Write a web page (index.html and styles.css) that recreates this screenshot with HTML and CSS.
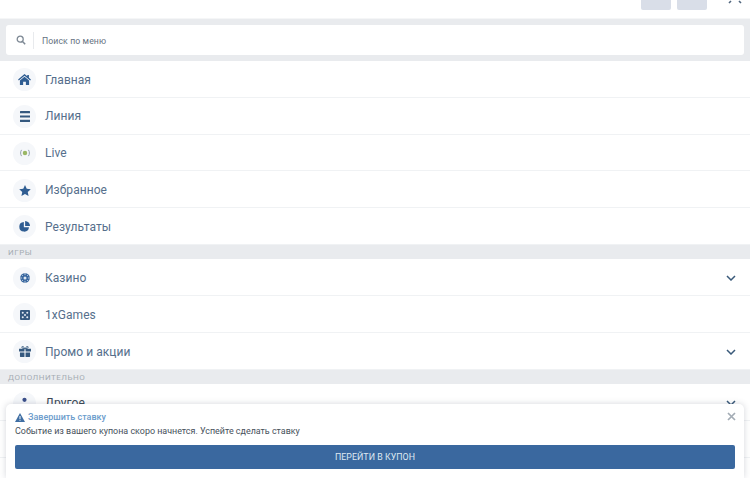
FILE: index.html
```html
<!DOCTYPE html>
<html lang="ru">
<head>
<meta charset="utf-8">
<title>Меню</title>
<link rel="stylesheet" href="styles.css">
</head>
<body>
<div class="page">
  <header class="top">
    <span class="top-btn"></span>
    <span class="top-btn"></span>
    <svg class="top-close" width="14" height="4" viewBox="0 0 14 4"><path d="M1 3 3 1M11 1l2 2" stroke="#51667e" stroke-width="1.6" fill="none"/></svg>
  </header>
  <div class="search-band">
    <div class="search">
      <svg class="search-icon" width="10" height="10" viewBox="0 0 10 10"><circle cx="4.2" cy="4.2" r="3" fill="none" stroke="#7d8894" stroke-width="1.3"/><path d="M6.5 6.5 9.2 9.2" stroke="#7d8894" stroke-width="1.5"/></svg>
      <span class="search-sep"></span>
      <span class="search-text">Поиск по меню</span>
    </div>
  </div>
  <nav>
    <a class="row"><span class="ico"><svg width="13" height="11" viewBox="0 0 14 12"><path d="M7 0 0 6l.8 1L7 1.8 13.2 7l.8-1-2.200-1.900V1h-1.800v1.500z" fill="#2f5d92"/><path d="M7 3 2 7.200V12h3.500V8.500h3V12H12V7.200z" fill="#2f5d92"/></svg></span><span class="label">Главная</span></a>
    <a class="row"><span class="ico"><svg width="10" height="11" viewBox="0 0 10 11"><path d="M.5 0h9a.5.5 0 0 1 .5.500V2.200H0V.5A.5.5 0 0 1 .5 0zM0 4.400h10v2.200H0zM0 8.800h10v1.700a.5.5 0 0 1-.5.500H.5a.5.5 0 0 1-.5-.500z" fill="#35597f"/></svg></span><span class="label">Линия</span></a>
    <a class="row"><span class="ico"><svg width="10" height="8" viewBox="0 0 11 9"><circle cx="5.500" cy="4.500" r="2.500" fill="#9ab765"/><path d="M1.600 1C.2 3 .2 6 1.600 8M9.400 1c1.400 2 1.400 5 0 7" fill="none" stroke="#8a97a6" stroke-width="1"/></svg></span><span class="label">Live</span></a>
    <a class="row"><span class="ico"><svg width="12" height="11" viewBox="0 0 13 12"><path d="M6.500 0l1.900 4 4.400.500-3.300 3 .9 4.400-3.900-2.200-3.900 2.200.9-4.400L.2 4.500 4.600 4z" fill="#2f5d92"/></svg></span><span class="label">Избранное</span></a>
    <a class="row"><span class="ico"><svg width="11" height="11" viewBox="0 0 12 12"><path d="M5.300 1a5.300 5.300 0 1 0 5.600 5.900H5.300z" fill="#2f5d92"/><path d="M6.700 0v5.500H12A5.500 5.500 0 0 0 6.700 0z" fill="#2f5d92"/></svg></span><span class="label">Результаты</span></a>
    <div class="band">ИГРЫ</div>
    <a class="row"><span class="ico"><svg width="10" height="10" viewBox="0 0 12 12"><circle cx="6" cy="6" r="5.800" fill="#3a689f"/><circle cx="6" cy="6" r="1.800" fill="#dfe7f0"/><path d="M6 .5v2M6 9.500v2M.5 6h2M9.500 6h2M2.100 2.100l1.400 1.400M8.500 8.500l1.400 1.400M9.900 2.100 8.500 3.500M3.500 8.500 2.100 9.900" stroke="#dfe7f0" stroke-width=".9"/></svg></span><span class="label">Казино</span><svg class="chev" width="10" height="6" viewBox="0 0 10 6"><path d="M1 1l4 4 4-4" fill="none" stroke="#3a5a7a" stroke-width="1.500"/></svg></a>
    <a class="row"><span class="ico"><svg width="10" height="10" viewBox="0 0 11 11"><rect width="11" height="11" rx="1" fill="#35597f"/><g fill="#e6edf4"><circle cx="3" cy="3" r="1.100"/><circle cx="8" cy="3" r="1.100"/><circle cx="5.500" cy="5.500" r="1.100"/><circle cx="3" cy="8" r="1.100"/><circle cx="8" cy="8" r="1.100"/></g></svg></span><span class="label">1xGames</span></a>
    <a class="row"><span class="ico"><svg width="12" height="11" viewBox="0 0 13 12"><path d="M0 3h5.900v3H0zM7.100 3H13v3H7.100zM1 7h4.900v5H1.500a.5.500 0 0 1-.5-.500zM7.100 7H12v4.500a.5.500 0 0 1-.5.500H7.100z" fill="#35597f"/><path d="M6.500 3C5 3 3 2.500 3 1.200 3 .2 4.800-.2 6.500 3zm0 0C8 3 10 2.500 10 1.200 10 .2 8.200-.2 6.500 3z" fill="none" stroke="#35597f" stroke-width="1"/></svg></span><span class="label">Промо и акции</span><svg class="chev" width="10" height="6" viewBox="0 0 10 6"><path d="M1 1l4 4 4-4" fill="none" stroke="#3a5a7a" stroke-width="1.500"/></svg></a>
    <div class="band">ДОПОЛНИТЕЛЬНО</div>
    <a class="row"><span class="ico"><svg width="11" height="12" viewBox="0 0 12 13"><circle cx="6" cy="3" r="2.300" fill="#3a4f8a"/><path d="M1 12c0-3 2-4.500 5-4.500s5 1.500 5 4.500z" fill="#3a5f92"/></svg></span><span class="label label-dark">Другое</span><svg class="chev" width="10" height="6" viewBox="0 0 10 6"><path d="M1 1l4 4 4-4" fill="none" stroke="#3a5a7a" stroke-width="1.500"/></svg></a>
    <div class="row"></div>
  </nav>
  <aside class="toast">
    <div class="toast-title">
      <svg width="10" height="9" viewBox="0 0 10 9"><path d="M5 0 10 9H0z" fill="#3f6ea3"/><path d="M4.500 3h1v3h-1zM4.500 6.800h1v1h-1z" fill="#fff"/></svg>
      <span>Завершить ставку</span>
    </div>
    <p class="toast-text">Событие из вашего купона скоро начнется. Успейте сделать ставку</p>
    <button class="toast-btn">ПЕРЕЙТИ В КУПОН</button>
    <svg class="toast-close" width="9" height="9" viewBox="0 0 9 9"><path d="M1 1l7 7M8 1 1 8" stroke="#a3acb5" stroke-width="1.700"/></svg>
  </aside>
</div>
</body>
</html>
```
FILE: styles.css
```css
* { box-sizing: border-box; }
html, body { margin: 0; padding: 0; }
body { font-family: Roboto, "Liberation Sans", sans-serif; background: #fff; }
.page { position: relative; width: 750px; height: 478px; overflow: hidden; background: #fff; }
.top { height: 19px; display: flex; align-items: flex-start; padding-left: 641px; gap: 6px; border-bottom: 1px solid #f5f6f7; }
.top-btn { width: 30px; height: 10px; background: #d9dee8; border-radius: 0 0 2px 2px; }
.top-close { margin-left: 15px; }
.search-band { height: 42px; padding: 6px; background: #e9ebee; }
.search { height: 30px; background: #fff; border-radius: 3px; display: flex; align-items: center; padding-left: 10px; }
.search-icon { flex: none; }
.search-sep { width: 1px; height: 17px; background: #e8eaed; margin: 0 8px 0 7px; }
.search-text { font-size: 8.700px; line-height: 12px; padding-top: 1px; color: #66727f; letter-spacing: .1px; }
.row { height: 36.800px; display: flex; align-items: center; padding: 1.500px 14px 0 13px; background: #fff; border-bottom: 1px solid #f0f2f4; }
.ico { flex: none; width: 23px; height: 23px; border-radius: 50%; background: #f5f7fa; display: flex; align-items: center; justify-content: center; }
.label { margin-left: 9px; flex: 1; font-size: 12px; color: #566f8c; letter-spacing: .05px; }
.label-dark { color: #3d4a58; }
.chev { flex: none; }
.band { height: 14.500px; background: #e9ebee; padding-left: 8px; font-size: 8px; line-height: 16.500px; letter-spacing: .5px; color: #a5abb3; }
.toast { position: absolute; left: 6px; top: 404px; width: 738px; height: 74px; padding: 8px 9px 0; background: #fff; border-radius: 5px 5px 0 0; box-shadow: 0 0 6px rgba(60,70,90,.22); }
.toast-title { display: flex; align-items: center; gap: 3px; font-size: 9px; font-weight: 500; line-height: 11px; color: #6c9ccc; }
.toast-text { margin: 2px 0 0; font-size: 8.930px; line-height: 13px; color: #46505a; }
.toast-btn { display: block; width: 720px; height: 24px; margin-top: 7px; padding: 0; border: 0; border-radius: 2px; background: #3a689f; color: #dfe8f2; font: 8.800px Roboto, "Liberation Sans", sans-serif; letter-spacing: .05px; }
.toast-close { position: absolute; right: 8px; top: 8px; }
```
